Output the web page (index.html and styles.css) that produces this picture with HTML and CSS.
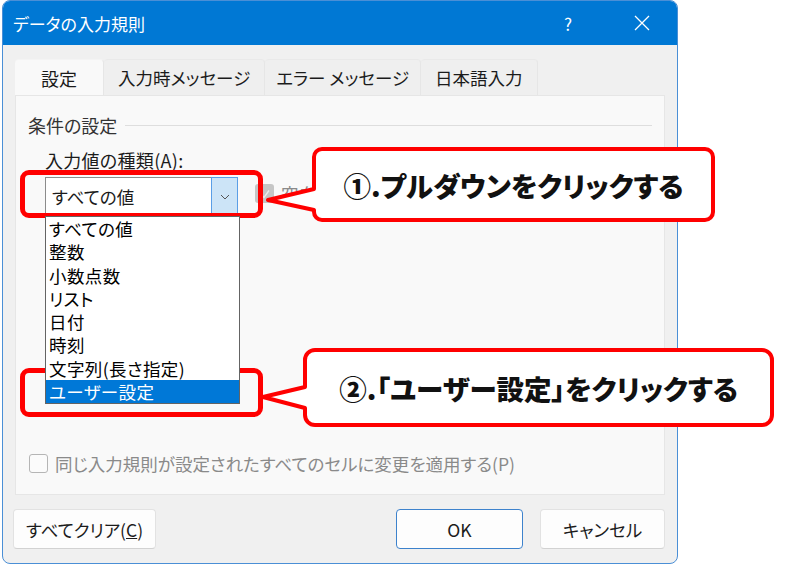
FILE: index.html
```html
<!DOCTYPE html>
<html lang="ja">
<head>
<meta charset="utf-8">
<title>データの入力規則</title>
<link rel="stylesheet" href="styles.css">
</head>
<body>
<div class="dialog">
  <div class="titlebar">
    <span class="title">データの入力規則</span>
    <span class="help">?</span>
    <span class="close">
      <svg width="16" height="16" viewBox="0 0 16 16"><path d="M1 1 L15 15 M15 1 L1 15" stroke="#fff" stroke-width="1.3" fill="none"/></svg>
    </span>
  </div>
  <div class="tabs">
    <div class="tab active">設定</div>
    <div class="tab">入力時メッセージ</div>
    <div class="tab tight">エラー メッセージ</div>
    <div class="tab">日本語入力</div>
  </div>
  <div class="panel">
    <div class="group-head"><span>条件の設定</span><span class="rule"></span></div>
    <div class="label">入力値の種類(<u>A</u>):</div>
    <div class="combo-row">
      <div class="combo">
        <span class="combo-text">すべての値</span>
        <span class="combo-btn">
          <svg width="10" height="6" viewBox="0 0 10 6"><polyline points="1,1 5,5 9,1" stroke="#555" stroke-width="1" fill="none"/></svg>
        </span>
        <div class="droplist">
          <div class="item">すべての値</div>
          <div class="item">整数</div>
          <div class="item">小数点数</div>
          <div class="item">リスト</div>
          <div class="item">日付</div>
          <div class="item">時刻</div>
          <div class="item">文字列(長さ指定)</div>
          <div class="item selected">ユーザー設定</div>
        </div>
      </div>
      <div class="check-small">
        <span class="cb-disabled">
          <svg width="12" height="12" viewBox="0 0 12 12"><polyline points="2,6.5 5,9.5 10,2.5" stroke="#ececec" stroke-width="1.4" fill="none"/></svg>
        </span>
        <span class="muted clipped">空白を無視する(B)</span>
      </div>
    </div>
    <div class="apply-row">
      <span class="cb-empty"></span>
      <span class="muted">同じ入力規則が設定されたすべてのセルに変更を適用する(P)</span>
    </div>
  </div>
  <div class="buttons">
    <button class="btn clear">すべてクリア(<u>C</u>)</button>
    <span class="spacer"></span>
    <button class="btn ok">OK</button>
    <button class="btn cancel">キャンセル</button>
  </div>
</div>

<div class="annotations">
  <div class="hl hl1"></div>
  <div class="hl hl2"></div>
  <svg class="bubbles" width="805" height="565" viewBox="0 0 805 565">
    <path d="M322 149 H705 A8 8 0 0 1 713 157 V212 A8 8 0 0 1 705 220 H322 A8 8 0 0 1 314 212 V210 L268 200 L314 189 V157 A8 8 0 0 1 322 149 Z" fill="#fff" stroke="#f00" stroke-width="4" stroke-linejoin="round"/>
    <path d="M315 350 H762 A10 10 0 0 1 772 360 V415 A10 10 0 0 1 762 425 H315 A10 10 0 0 1 305 415 V408 L263 397 L305 387 V360 A10 10 0 0 1 315 350 Z" fill="#fff" stroke="#f00" stroke-width="4" stroke-linejoin="round"/>
  </svg>
  <div class="note note1">①.プルダウンをクリックする</div>
  <div class="note note2">②.「ユーザー設定」をクリックする</div>
</div>
</body>
</html>
```

FILE: styles.css
```css
* { box-sizing: border-box; }
html, body { margin: 0; padding: 0; }
body {
  background: #ffffff;
  width: 805px;
  height: 565px;
  position: relative;
  overflow: hidden;
  font-family: "Noto Sans CJK JP", "Noto Sans", sans-serif;
  font-feature-settings: "palt";
  color: #1b1b1b;
}
.dialog {
  margin-left: 2px;
  width: 676px;
  height: 564px;
  background: #f0f0f0;
  border: 1px solid #4a8fd6;
  border-radius: 8px;
  overflow: hidden;
  display: flex;
  flex-direction: column;
}
.titlebar {
  height: 44px;
  background: #0078d4;
  color: #fff;
  display: flex;
  align-items: center;
  padding-left: 10px;
  flex-shrink: 0;
}
.title { font-size: 17px; flex: 1; }
.help { font-size: 17px; width: 20px; margin-right: 56px; text-align: center; }
.close { width: 16px; height: 16px; margin-right: 27px; display: flex; }
.tabs {
  display: flex;
  margin: 14px 0 0 12px;
  height: 36px;
  flex-shrink: 0;
}
.tab {
  font-size: 17.5px;
  padding: 0 14px;
  display: flex;
  align-items: center;
  background: #efefef;
  border-right: 1px solid #e6e6e6;
  border-top: 1px solid #e9e9e9;
  border-top-left-radius: 4px;
  border-top-right-radius: 4px;
  white-space: pre;
}
.tab.tight { padding: 0 11px; }
.tab.active {
  background: #f9f9f9;
  padding: 0 26px;
  font-size: 18px;
  border-top: 1px solid #f4f4f4;
}
.panel {
  margin-left: 12px;
  width: 650px;
  height: 400px;
  background: #f9f9f9;
  border: 1px solid #e6e6e6;
  display: flex;
  flex-direction: column;
  padding: 17px 12px 19px 12px;
  flex-shrink: 0;
}
.group-head {
  display: flex;
  align-items: center;
  height: 24px;
  font-size: 18px;
  color: #333;
}
.rule { flex: 1; height: 1px; background: #dedede; margin-left: 8px; }
.label {
  margin: 11px 0 0 17px;
  height: 24px;
  line-height: 24px;
  font-size: 18px;
  letter-spacing: 0.3px;
}
.label u { text-underline-offset: 2px; }
.combo-row {
  margin: 5px 0 0 17px;
  display: flex;
  align-items: flex-start;
}
.combo {
  position: relative;
  width: 193px;
  height: 39px;
  background: #fff;
  border: 1px solid #8c8c8c;
  display: flex;
  align-items: center;
}
.combo-text { flex: 1; padding-left: 6px; font-size: 17.5px; }
.combo-btn {
  width: 27px;
  height: 39px;
  margin: -1px -1px -1px 0;
  background: #cce4f7;
  border: 1px solid #5a9ee6;
  display: flex;
  align-items: center;
  justify-content: center;
}
.droplist {
  position: absolute;
  top: 38px;
  left: -1px;
  width: 195px;
  height: 188px;
  background: #fff;
  border: 1px solid #646464;
  z-index: 2;
}
.item {
  height: 23.3px;
  line-height: 23.3px;
  padding-left: 3px;
  font-size: 17.5px;
  color: #000;
  white-space: nowrap;
  letter-spacing: 0.4px;
}
.item.selected { background: #0078d7; color: #fff; }
.check-small {
  display: flex;
  align-items: center;
  gap: 7px;
  margin: 4px 0 0 17px;
}
.cb-disabled {
  width: 19px;
  height: 19px;
  flex-shrink: 0;
  border-radius: 3px;
  background: #c6c6c6;
  display: flex;
  align-items: center;
  justify-content: center;
}
.muted { color: #8a8a8a; font-size: 17.5px; }
.clipped {
  display: block;
  white-space: nowrap;
  width: 28px;
  overflow: hidden;
}
.apply-row {
  margin-top: auto;
  display: flex;
  align-items: center;
  gap: 7px;
  height: 24px;
  padding-left: 1px;
}
.cb-empty {
  width: 19px;
  height: 19px;
  border: 1px solid #b5b5b5;
  border-radius: 3px;
  background: #fbfbfb;
}
.buttons {
  display: flex;
  margin-top: 14px;
  padding: 0 12px 0 10px;
}
.spacer { flex: 1; }
.btn {
  font-family: inherit;
  font-feature-settings: "palt";
  font-size: 17.5px;
  color: #1b1b1b;
  height: 40px;
  background: #fdfdfd;
  border: 1px solid #e2e2e2;
  border-bottom-color: #d2d2d2;
  border-radius: 4px;
  padding: 0;
}
.btn.clear { width: 143px; }
.btn.ok { width: 127px; border: 1px solid #3d82cc; margin-right: 17px; }
.btn.cancel { width: 125px; }
.annotations {
  position: absolute;
  left: 0;
  top: 0;
  width: 805px;
  height: 565px;
  pointer-events: none;
}
.hl {
  position: absolute;
  left: 20px;
  width: 243px;
  border: 5px solid #f00;
  border-radius: 9px;
}
.hl1 { top: 170px; height: 48px; }
.hl2 { top: 368px; height: 49px; }
.bubbles { position: absolute; left: 0; top: 0; }
.note {
  position: absolute;
  display: flex;
  align-items: center;
  justify-content: center;
  font-weight: 900;
  font-size: 27.5px;
  color: #111;
  white-space: nowrap;
}
.note1 { left: 312px; top: 147px; width: 403px; height: 75px; }
.note2 { left: 303px; top: 348px; width: 471px; height: 79px; }
```
